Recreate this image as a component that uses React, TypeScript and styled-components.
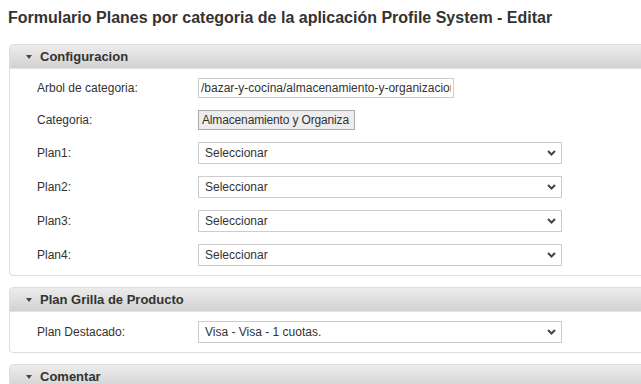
import React from 'react';
import styled, { createGlobalStyle } from 'styled-components';

const GlobalStyle = createGlobalStyle`
  html, body {
    margin: 0;
    padding: 0;
    background: #fff;
    overflow: hidden;
  }
  body {
    font-family: "Liberation Sans", Arial, sans-serif;
    color: #333;
  }
`;

const Page = styled.div`
  width: 720px;
  padding: 9px 0 0 8px;
`;

const Title = styled.h1`
  margin: 0 0 17px;
  font-size: 16px;
  line-height: 18px;
  font-weight: bold;
  color: #333;
`;

const Panel = styled.section`
  margin: 0 0 11px 1px;
  border: 1px solid #ddd;
  border-radius: 4px;
  background: #fff;
  overflow: hidden;
`;

const PanelHeader = styled.div`
  display: flex;
  align-items: center;
  gap: 8px;
  height: 23px;
  padding-left: 16px;
  background: linear-gradient(to bottom, #ececec 0%, #d2d2d2 100%);
  border-bottom: 1px solid #e4e4e4;
  font-size: 13px;
  font-weight: bold;
  color: #333;
`;

const Caret = styled.span`
  width: 0;
  height: 0;
  border-left: 3.5px solid transparent;
  border-right: 3.5px solid transparent;
  border-top: 4px solid #444;
  margin-top: 1px;
`;

const PanelBody = styled.div`
  display: flex;
  flex-direction: column;
  gap: 12px;
  padding: 9px 0 9px 27px;
`;

const Row = styled.div`
  display: grid;
  grid-template-columns: 161px auto;
  align-items: center;
`;

const Label = styled.label`
  font-size: 12px;
  color: #333;
`;

const TextInput = styled.input`
  box-sizing: border-box;
  width: 256px;
  height: 20px;
  padding: 0 2px;
  border: 1px solid #ccc;
  font-family: "Liberation Sans", Arial, sans-serif;
  font-size: 12px;
  color: #333;
  outline: none;
`;

const ReadOnlyBox = styled.div`
  box-sizing: border-box;
  width: 157px;
  height: 20px;
  padding: 0 3px;
  display: flex;
  align-items: center;
  white-space: nowrap;
  overflow: hidden;
  border: 1px solid #aaa;
  background: #ededed;
  font-size: 12px;
  letter-spacing: -0.15px;
  color: #333;
`;

const SelectWrap = styled.div`
  position: relative;
  width: 364px;
  height: 22px;
`;

const Select = styled.select`
  appearance: none;
  box-sizing: border-box;
  width: 100%;
  height: 100%;
  padding: 0 20px 0 6px;
  border: 1px solid #ccc;
  background: #fff;
  font-family: "Liberation Sans", Arial, sans-serif;
  font-size: 12px;
  color: #333;
  outline: none;
`;

const Chevron = styled.svg`
  position: absolute;
  right: 6px;
  top: 8px;
  pointer-events: none;
`;

const Arrow = () => (
  <Chevron width="9" height="6" viewBox="0 0 9 6">
    <path d="M1 1 L4.5 4.5 L8 1" fill="none" stroke="#444" strokeWidth="2" />
  </Chevron>
);

const SelectField: React.FC<{ value: string }> = ({ value }) => (
  <SelectWrap>
    <Select defaultValue={value}>
      <option>{value}</option>
    </Select>
    <Arrow />
  </SelectWrap>
);

const plans = ['Plan1:', 'Plan2:', 'Plan3:', 'Plan4:'];

export default function App() {
  return (
    <>
      <GlobalStyle />
      <Page>
        <Title>Formulario Planes por categoria de la aplicación Profile System - Editar</Title>

        <Panel>
          <PanelHeader><Caret />Configuracion</PanelHeader>
          <PanelBody>
            <Row>
              <Label>Arbol de categoria:</Label>
              <TextInput defaultValue="/bazar-y-cocina/almacenamiento-y-organizacion" />
            </Row>
            <Row>
              <Label>Categoria:</Label>
              <ReadOnlyBox>Almacenamiento y Organiza</ReadOnlyBox>
            </Row>
            {plans.map(p => (
              <Row key={p}>
                <Label>{p}</Label>
                <SelectField value="Seleccionar" />
              </Row>
            ))}
          </PanelBody>
        </Panel>

        <Panel>
          <PanelHeader><Caret />Plan Grilla de Producto</PanelHeader>
          <PanelBody>
            <Row>
              <Label>Plan Destacado:</Label>
              <SelectField value="Visa - Visa - 1 cuotas." />
            </Row>
          </PanelBody>
        </Panel>

        <Panel>
          <PanelHeader><Caret />Comentar</PanelHeader>
          <PanelBody />
        </Panel>
      </Page>
    </>
  );
}
